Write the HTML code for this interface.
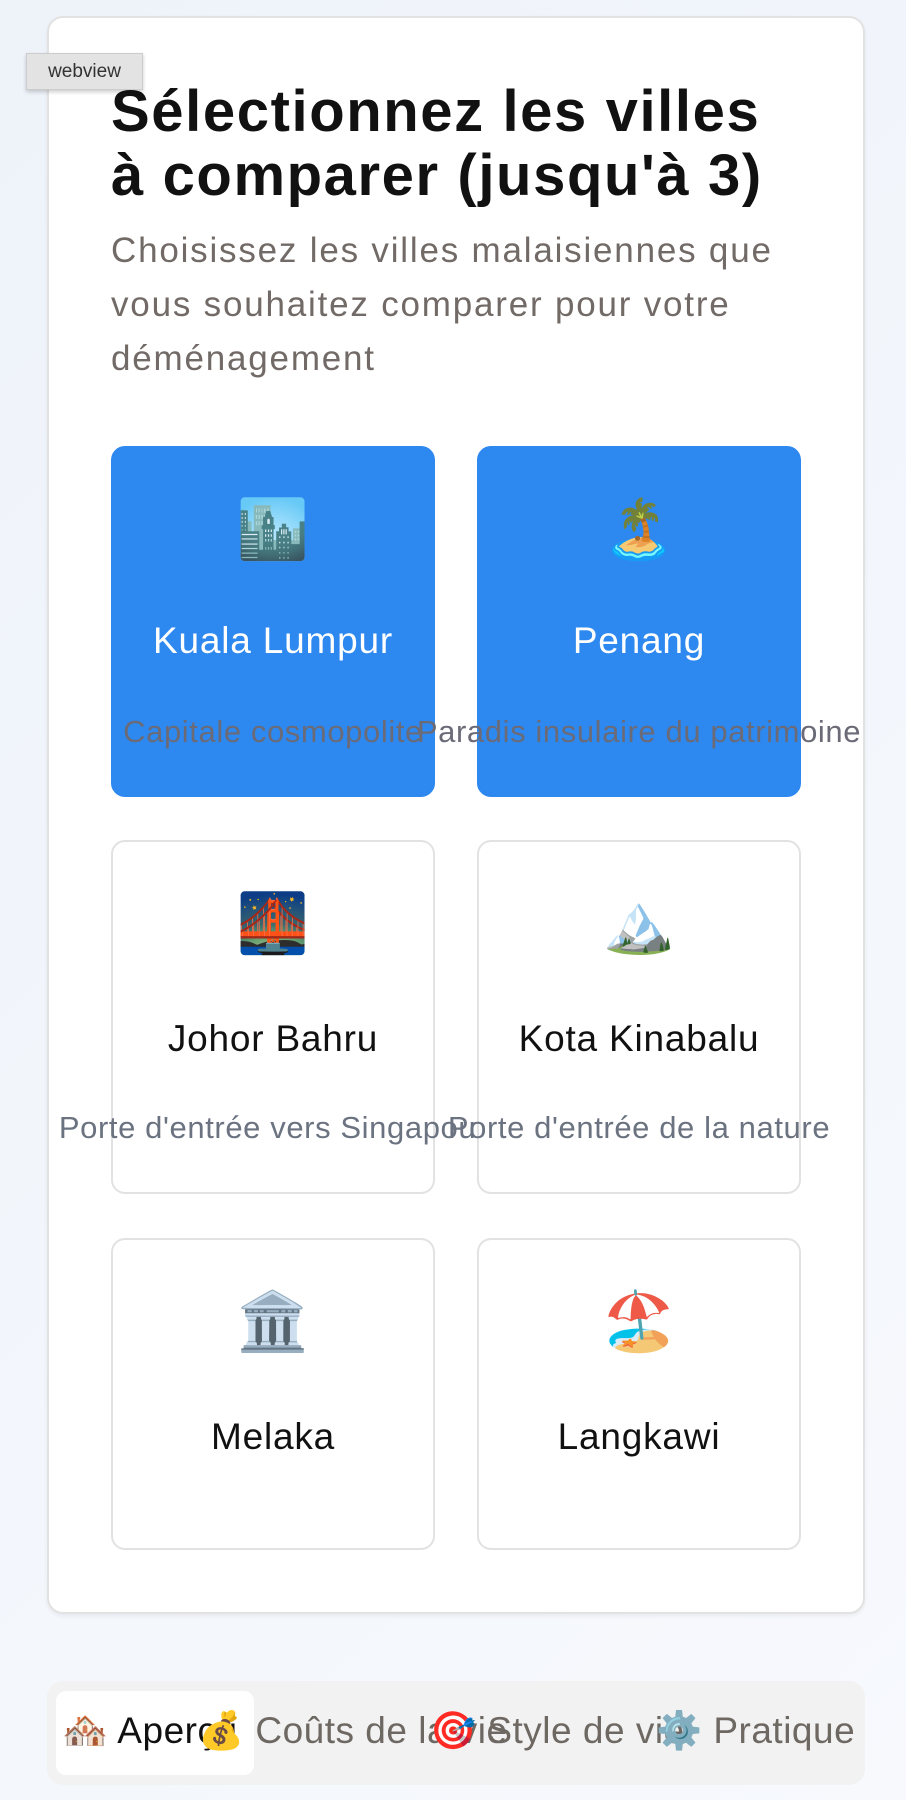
<!DOCTYPE html>
<html><head><meta charset="utf-8"><style>
*{margin:0;padding:0;box-sizing:border-box}
html,body{width:906px;height:1800px;overflow:hidden}
body{background:linear-gradient(135deg,#eef3fa,#f7f9fd);font-family:"Liberation Sans","Noto Sans CJK JP",sans-serif;position:relative}
.card{position:absolute;left:47px;top:16px;width:818px;height:1598px;background:#fff;border:2px solid #e2e2e2;border-radius:16px;box-shadow:0 2px 4px rgba(0,0,0,.06)}
.tag{position:absolute;left:26px;top:53px;width:117px;height:37px;background:#e3e3e3;border:1px solid #ccc;font-size:19px;color:#333;text-align:center;line-height:35px;box-shadow:0 2px 4px rgba(0,0,0,.2);z-index:5}
h1{position:absolute;left:111px;top:80px;font-size:58px;line-height:64px;font-weight:bold;color:#111;letter-spacing:1.6px;white-space:nowrap}
.sub{position:absolute;left:111px;top:224px;font-size:35px;line-height:54px;color:#716a66;letter-spacing:1.8px;white-space:nowrap}
.c{position:absolute;width:324px;border:2px solid #e2e2e2;border-radius:14px;background:#fff;text-align:center}
.c.s{background:#2d88f0;border-color:#2d88f0}
.e{position:absolute;left:0;right:0;top:50px;font-size:58px;line-height:64px}
.n{position:absolute;left:0;right:0;top:60px;font-size:37px;color:#111;letter-spacing:0.8px}
.s .n{color:#fff}
.d{position:absolute;left:50%;transform:translateX(-50%);white-space:nowrap;font-size:31px;color:#6b7280;letter-spacing:0.6px}
.s .d{color:#6b6b78}
.tabs{position:absolute;left:47px;top:1681px;width:818px;height:104px;background:#f2f2f2;border-radius:16px}
.act{position:absolute;left:56px;top:1691px;width:198px;height:84px;background:#fff;border-radius:10px}
.t{position:absolute;top:1706px;font-size:37px;line-height:50px;color:#6e6863;white-space:nowrap;letter-spacing:0.5px}
</style></head><body>
<div class="card"></div>
<div class="tag">webview</div>
<h1>Sélectionnez les villes<br>à comparer (jusqu'à 3)</h1>
<div class="sub">Choisissez les villes malaisiennes que<br>vous souhaitez comparer pour votre<br>déménagement</div>

<div class="c s" style="left:111px;top:446px;height:351px"><div class="e">🏙️</div><div class="n" style="top:172px">Kuala Lumpur</div><div class="d" style="top:266px">Capitale cosmopolite</div></div>
<div class="c s" style="left:477px;top:446px;height:351px"><div class="e">🏝️</div><div class="n" style="top:172px">Penang</div><div class="d" style="top:266px">Paradis insulaire du patrimoine</div></div>

<div class="c" style="left:111px;top:840px;height:354px"><div class="e">🌉</div><div class="n" style="top:176px">Johor Bahru</div><div class="d" style="top:268px">Porte d'entrée vers Singapour</div></div>
<div class="c" style="left:477px;top:840px;height:354px"><div class="e">🏔️</div><div class="n" style="top:176px">Kota Kinabalu</div><div class="d" style="top:268px">Porte d'entrée de la nature</div></div>

<div class="c" style="left:111px;top:1238px;height:312px"><div class="e">🏛️</div><div class="n" style="top:176px">Melaka</div></div>
<div class="c" style="left:477px;top:1238px;height:312px"><div class="e">🏖️</div><div class="n" style="top:176px">Langkawi</div></div>

<div class="tabs"></div>
<div class="act"></div>
<div class="t" style="left:62px;color:#111">🏘️ Aperçu</div>
<div class="t" style="left:198px">💰 Coûts de la vie</div>
<div class="t" style="left:430px">🎯 Style de vie</div>
<div class="t" style="left:656px">⚙️ Pratique</div>
</body></html>
